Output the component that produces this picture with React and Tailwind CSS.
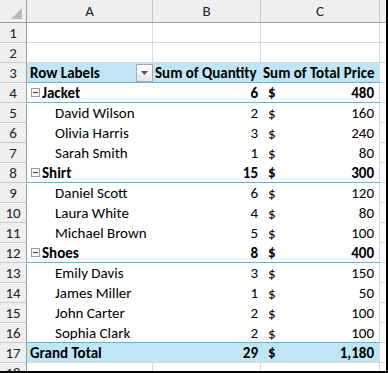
import React from "react";

const font = { fontFamily: "Carlito, Lato, 'Open Sans', sans-serif" };

const rows = [
  { n: 1, type: "empty" },
  { n: 2, type: "empty" },
  { n: 3, type: "head" },
  { n: 4, type: "cat", label: "Jacket", qty: "6", price: "480" },
  { n: 5, type: "item", label: "David Wilson", qty: "2", price: "160" },
  { n: 6, type: "item", label: "Olivia Harris", qty: "3", price: "240" },
  { n: 7, type: "item", label: "Sarah Smith", qty: "1", price: "80" },
  { n: 8, type: "cat", label: "Shirt", qty: "15", price: "300" },
  { n: 9, type: "item", label: "Daniel Scott", qty: "6", price: "120" },
  { n: 10, type: "item", label: "Laura White", qty: "4", price: "80" },
  { n: 11, type: "item", label: "Michael Brown", qty: "5", price: "100" },
  { n: 12, type: "cat", label: "Shoes", qty: "8", price: "400" },
  { n: 13, type: "item", label: "Emily Davis", qty: "3", price: "150" },
  { n: 14, type: "item", label: "James Miller", qty: "1", price: "50" },
  { n: 15, type: "item", label: "John Carter", qty: "2", price: "100" },
  { n: 16, type: "item", label: "Sophia Clark", qty: "2", price: "100", last: true },
  { n: 17, type: "total", label: "Grand Total", qty: "29", price: "1,180" },
  { n: 18, type: "empty" },
];

function MinusBox() {
  return (
    <span className="mr-[2px] flex h-[9px] w-[9px] items-center justify-center border border-[#9a9a9a] bg-[#f7f7f7]">
      <span className="h-px w-[5px] bg-[#404040]" />
    </span>
  );
}

function FilterButton() {
  return (
    <span className="flex h-[18px] w-[17px] items-center justify-center border border-[#a9a9a9] bg-gradient-to-b from-white to-[#e6e6e6]">
      <svg width="7" height="4" viewBox="0 0 7 4">
        <path d="M0 0h7L3.5 4z" fill="#555" />
      </svg>
    </span>
  );
}

function Row({ r }) {
  const blueLine = r.type === "head" || r.type === "cat" || r.last;
  const filled = r.type === "head" || r.type === "total";
  const bold = r.type !== "item";
  let cellBorder = "border-b-white";
  if (r.type === "empty") cellBorder = "border-b-[#d9d9d9]";
  if (blueLine) cellBorder = "border-b-[#5bb6e6]";
  if (r.type === "total") cellBorder = "border-b-[#d9d9d9]";
  const bg = filled ? "bg-[#c0e6f5]" : "bg-white";

  return (
    <div className="flex h-[20px]">
      <div className="flex w-[27px] shrink-0 items-center justify-center border-r border-b border-r-[#9e9e9e] border-b-[#c9c9c9] bg-[#efefef] pt-px text-[#222]">
        {r.n}
      </div>
      {r.type === "empty" ? (
        <>
          <div className={`w-[126px] shrink-0 border-r border-b border-r-[#d9d9d9] ${cellBorder}`} />
          <div className={`w-[108px] shrink-0 border-r border-b border-r-[#d9d9d9] ${cellBorder}`} />
          <div className={`w-[119px] shrink-0 border-r border-b border-r-[#d9d9d9] ${cellBorder}`} />
        </>
      ) : (
        <>
          <div className={`flex w-[126px] shrink-0 items-center border-b ${cellBorder} ${bg} ${bold ? "font-bold" : ""}`}>
            {r.type === "head" && (
              <>
                <span className="flex-1 pl-[3px] pt-px">Row Labels</span>
                <FilterButton />
              </>
            )}
            {r.type === "cat" && (
              <span className="flex items-center pl-[4px]">
                <MinusBox />
                <span className="pt-px">{r.label}</span>
              </span>
            )}
            {r.type === "item" && <span className="pl-[28px] pt-px">{r.label}</span>}
            {r.type === "total" && <span className="pl-[3px] pt-px">{r.label}</span>}
          </div>
          <div className={`flex w-[108px] shrink-0 items-center border-b pt-px ${cellBorder} ${bg} ${bold ? "font-bold" : ""}`}>
            {r.type === "head" ? (
              <span className="whitespace-nowrap pl-[2px]">Sum of Quantity</span>
            ) : (
              <span className="w-full pr-[3px] text-right">{r.qty}</span>
            )}
          </div>
          <div className={`flex w-[119px] shrink-0 items-center border-r border-b pt-px border-r-[#d9d9d9] ${cellBorder} ${bg} ${bold ? "font-bold" : ""}`}>
            {r.type === "head" ? (
              <span className="whitespace-nowrap pl-[2px]">Sum of Total Price</span>
            ) : (
              <>
                <span className="pl-[7px]">$</span>
                <span className="flex-1 pr-[5px] text-right">{r.price}</span>
              </>
            )}
          </div>
        </>
      )}
      <div className="w-[6px] shrink-0 border-b border-b-[#d9d9d9]" />
    </div>
  );
}

export default function App() {
  return (
    <div
      className="h-[373px] w-[388px] overflow-hidden border-r-2 border-b-2 border-black bg-white text-[15px] leading-none text-black"
      style={font}
    >
      <div className="flex h-[23px] border-b border-b-[#9e9e9e] bg-[#efefef] text-[#222]">
        <div className="relative w-[27px] shrink-0 border-r border-r-[#9e9e9e]">
          <svg className="absolute left-[11px] top-[8px]" width="11" height="11" viewBox="0 0 11 11">
            <path d="M11 0v11H0z" fill="#b9b9b9" />
          </svg>
        </div>
        <div className="flex w-[126px] shrink-0 items-center justify-center border-r border-r-[#c6c6c6] pt-px">A</div>
        <div className="flex w-[108px] shrink-0 items-center justify-center border-r border-r-[#c6c6c6] pt-px">B</div>
        <div className="flex w-[119px] shrink-0 items-center justify-center border-r border-r-[#c6c6c6] pt-px">C</div>
        <div className="w-[6px] shrink-0" />
      </div>
      {rows.map((r) => (
        <Row key={r.n} r={r} />
      ))}
    </div>
  );
}
